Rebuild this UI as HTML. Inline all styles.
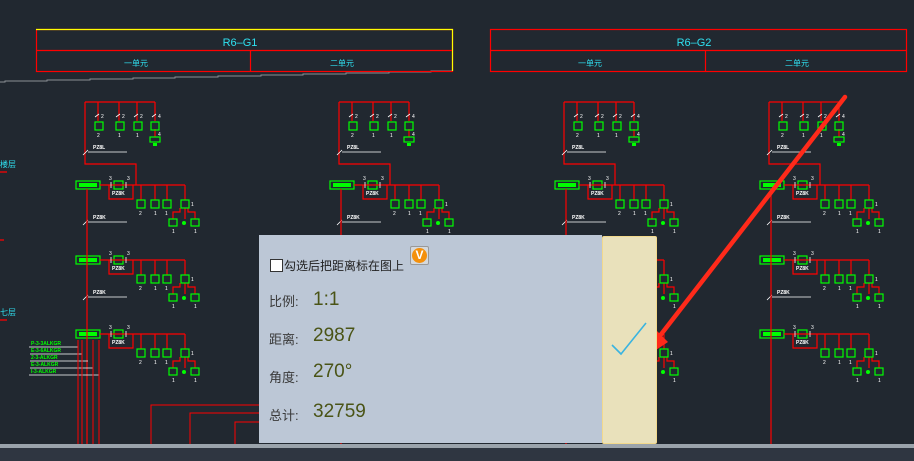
<!DOCTYPE html>
<html><head><meta charset="utf-8"><style>
html,body{margin:0;padding:0;width:914px;height:461px;overflow:hidden;background:#212830;font-family:"Liberation Sans","Noto Sans CJK SC",sans-serif}
svg{position:absolute;left:0;top:0}
.dlg{position:absolute;left:259px;top:235px;width:343px;height:208px;background:#bcc7d6}
.rp{position:absolute;left:602px;top:236px;width:53px;height:206px;background:#e9e1bb;border:1px solid #f2d98c;border-radius:2px}
.lb{position:absolute;left:10px;font-size:13px;color:#3a3a3a}
.vl{position:absolute;left:54px;font-size:19px;color:#4a5416}
.bot1{position:absolute;left:0;top:444px;width:914px;height:4px;background:#9aa3ab}
.bot2{position:absolute;left:0;top:448px;width:914px;height:13px;background:#2f3641}
</style></head><body>
<svg width="914" height="461" viewBox="0 0 914 461">
<defs>
<g id="top">
 <path d="M0 102H70M13 102V121M34 102V121M52 102V121M70 102V121M70 129V137M0 102V164H51V185" stroke="#f00" stroke-width="1.2" fill="none"/>
 <g fill="none" stroke="#0f0" stroke-width="1.2"><rect x="10" y="122" width="8" height="8"/><rect x="31" y="122" width="8" height="8"/><rect x="49" y="122" width="8" height="8"/><rect x="66" y="122" width="8" height="8"/><rect x="65" y="137" width="10" height="5"/></g>
 <rect x="68" y="143" width="4" height="3" fill="#0f0"/>
 <g fill="#fff" font-size="5"><text x="16" y="118">2</text><text x="37" y="118">2</text><text x="55" y="118">2</text><text x="73" y="118">4</text><text x="73" y="136">4</text><text x="12" y="137">2</text><text x="33" y="137">1</text><text x="51" y="137">1</text><text x="8" y="149" font-weight="bold">PZ8L</text></g>
 <path d="M3 152H42M-2 155L3 150M10 117l4-3M31 117l4-3M49 117l4-3M67 117l4-3" stroke="#fff" stroke-width="0.8"/>
</g>
<g id="dist">
 <rect x="-9" y="0" width="24" height="8" fill="none" stroke="#0f0" stroke-width="1.2"/>
 <rect x="-6" y="2" width="18" height="4" fill="#0f0"/>
 <rect x="29" y="0" width="9" height="8" fill="none" stroke="#0f0" stroke-width="1.2"/>
 <path d="M15 4H100M24 4V18H48V4M56 4V19M70 4V19M82 4V19M100 4V19M95 27V31H88V38M100 27V38M103 27V31H110V38" stroke="#f00" stroke-width="1.2" fill="none"/>
 <g fill="none" stroke="#0f0" stroke-width="1.2"><rect x="52" y="19" width="8" height="8"/><rect x="66" y="19" width="8" height="8"/><rect x="78" y="19" width="8" height="8"/><rect x="96" y="19" width="8" height="8"/><rect x="84" y="38" width="8" height="7"/><rect x="106" y="38" width="8" height="7"/></g>
 <circle cx="99" cy="42" r="2" fill="#0f0"/>
 <g fill="#fff" font-size="5"><text x="24" y="-1">3</text><text x="42" y="-1">3</text><text x="27" y="14" font-weight="bold">PZ8K</text><text x="54" y="34">2</text><text x="69" y="34">1</text><text x="80" y="34">1</text><text x="106" y="25">1</text><text x="87" y="52">1</text><text x="109" y="52">1</text></g>
 <path d="M26 1V7M41 1V7" stroke="#fff" stroke-width="0.8"/>
</g>
<g id="col">
 <use href="#top"/>
 <use href="#dist" y="181" x="0"/>
 <path d="M3 222H42M-2 225L3 220" stroke="#fff" stroke-width="0.8"/>
 <text x="8" y="219" fill="#fff" font-size="5" font-weight="bold">PZ8K</text>
 <use href="#dist" y="256"/>
 <path d="M3 297H42M-2 300L3 295" stroke="#fff" stroke-width="0.8"/>
 <text x="8" y="294" fill="#fff" font-size="5" font-weight="bold">PZ8K</text>
 <use href="#dist" y="330"/>
 <path d="M2 189V445" stroke="#f00" stroke-width="1.2"/>
</g>
</defs>
<path d="M0 82H5V81H47V80H90V79H133V78H175V77H218V76H261V75H303V74H346V73H389V72H431V71H452" stroke="#8a8f95" stroke-width="1" fill="none"/>
<rect x="36.5" y="29.5" width="416" height="42" fill="none" stroke="#f00" stroke-width="1.2"/>
<path d="M36 29.5H452.5V71" stroke="#ff0" stroke-width="1.2" fill="none"/>
<path d="M36 50.5H452M250.5 50V71" stroke="#f00" stroke-width="1.2"/>
<rect x="490.5" y="29.5" width="416" height="42" fill="none" stroke="#f00" stroke-width="1.2"/>
<path d="M490 50.5H906M705.5 50V71" stroke="#f00" stroke-width="1.2"/>
<g fill="#2fe0f0" font-size="11" text-anchor="middle"><text x="240" y="46">R6–G1</text><text x="694" y="46">R6–G2</text></g>
<g fill="#2fe0f0" font-size="8" text-anchor="middle"><text x="136" y="66">一单元</text><text x="342" y="66">二单元</text><text x="590" y="66">一单元</text><text x="797" y="66">二单元</text></g>
<g fill="#2fe0f0" font-size="8"><text x="0" y="167">楼层</text><text x="0" y="315">七层</text></g>
<path d="M0 172H7M0 320H7M0 240H4" stroke="#f00" stroke-width="1.2"/>
<use href="#col" x="85"/>
<use href="#col" x="339"/>
<use href="#col" x="564"/>
<use href="#col" x="769"/>
<g fill="#0f0" font-size="5" font-weight="bold"><text x="31" y="345">P-3-3ALKGR</text><text x="31" y="352">E-3-6ALKGR</text><text x="31" y="359">2-3-ALKGR</text><text x="31" y="366">E-3-ALKGR</text><text x="31" y="373">I-3-ALKGR</text></g>
<path d="M29 347H78M30 354H82M30 361H88M30 368H93M29 375H99" stroke="#fff" stroke-width="0.8"/>
<path d="M78 340V445M82 340V445M93 340V445M99 340V445M151 445V405H260M190 445V413H260M235 445V422H260" stroke="#f00" stroke-width="1" fill="none"/>
<path d="M845 97L659 337" stroke="#ff2a1a" stroke-width="4.5" stroke-linecap="round"/>
<path d="M650 354L653 327L668 342Z" fill="#ff2a1a"/>
</svg>
<div class="dlg">
 <div style="position:absolute;left:11px;top:24px;width:11px;height:11px;background:#fff;border:1px solid #333"></div>
 <div style="position:absolute;left:25px;top:22px;font-size:12px;color:#222">勾选后把距离标在图上</div>
 <div style="position:absolute;left:151px;top:11px;width:17px;height:17px;background:#d5d9dd;border:1px solid #999;border-radius:2px"><div style="position:absolute;left:1px;top:1px;width:15px;height:15px;border-radius:50%;background:#f4900c;color:#fff;font-size:12px;font-weight:bold;text-align:center;line-height:15px">V</div></div>
 <div class="lb" style="top:56px">比例:</div><div class="vl" style="top:54px">1:1</div>
 <div class="lb" style="top:94px">距离:</div><div class="vl" style="top:90px">2987</div>
 <div class="lb" style="top:132px">角度:</div><div class="vl" style="top:126px">270°</div>
 <div class="lb" style="top:170px">总计:</div><div class="vl" style="top:166px">32759</div>
</div>
<div class="rp"></div>
<svg width="914" height="461" style="pointer-events:none"><path d="M612 345L621 354L646 323" stroke="#3ab4e0" stroke-width="1.6" fill="none"/></svg>
<div class="bot1"></div><div class="bot2"></div>
</body></html>
